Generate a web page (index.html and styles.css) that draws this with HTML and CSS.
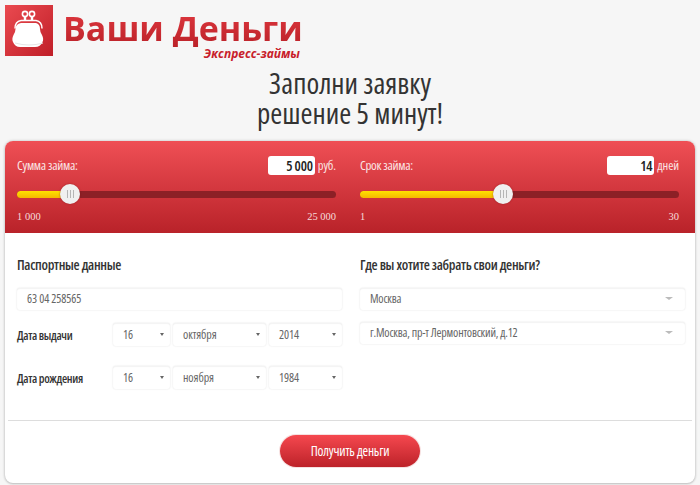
FILE: index.html
```html
<!DOCTYPE html>
<html lang="ru">
<head>
<meta charset="utf-8">
<title>Ваши Деньги</title>
<link rel="stylesheet" href="styles.css">
</head>
<body>
<header class="brand">
  <svg class="brand-icon" viewBox="0 0 48 51" width="48" height="51" aria-hidden="true">
    <defs>
      <linearGradient id="sq" x1="0" y1="0" x2="1" y2="1">
        <stop offset="0" stop-color="#ea4a50"/>
        <stop offset="1" stop-color="#c01f28"/>
      </linearGradient>
    </defs>
    <rect width="48" height="51" fill="url(#sq)"/>
    <circle cx="20" cy="9" r="2.6" fill="none" stroke="#fff" stroke-width="1.6"/>
    <circle cx="27" cy="9" r="2.6" fill="none" stroke="#fff" stroke-width="1.6"/>
    <path d="M20 12v3M27 12v3" stroke="#fff" stroke-width="2.4"/>
    <path d="M16 15.500h15q6 1 6 8M16 15.500q-6 1-6 8" fill="none" stroke="#fff" stroke-width="1.500"/>
    <path d="M16 18h15q4 1 4 6 0 3 2 6 2 4 .5 7-2 5-7.500 5H15q-5 0-7-5-1.500-3 .5-7 2-3 2-6 0-5 5.500-6z" fill="#fff"/>
    <path d="M10 38q14 4 28 0" fill="none" stroke="#e6e6e6" stroke-width="1"/>
  </svg>
  <div class="brand-text">
    <div class="brand-name">Ваши Деньги</div>
    <div class="brand-sub">Экспресс-займы</div>
  </div>
</header>

<h1 class="title">Заполни заявку<br>решение 5 минут!</h1>

<main class="card">
  <section class="sliders">
    <div class="slider">
      <div class="slider-head">
        <span class="slider-label">Сумма займа:</span>
        <span class="slider-value"><span class="value-box">5 000</span><span class="unit">руб.</span></span>
      </div>
      <div class="track">
        <div class="fill" style="width:16.6%"><span class="thumb"></span></div>
      </div>
      <div class="range"><span>1 000</span><span>25 000</span></div>
    </div>
    <div class="slider">
      <div class="slider-head">
        <span class="slider-label">Срок займа:</span>
        <span class="slider-value"><span class="value-box">14</span><span class="unit">дней</span></span>
      </div>
      <div class="track">
        <div class="fill" style="width:44.8%"><span class="thumb"></span></div>
      </div>
      <div class="range"><span>1</span><span>30</span></div>
    </div>
  </section>

  <section class="form">
    <div class="col">
      <h2 class="col-title">Паспортные данные</h2>
      <div class="field passport">63 04 258565</div>
      <div class="date-row">
        <span class="date-label">Дата выдачи</span>
        <div class="date-selects">
          <div class="field pick">16</div>
          <div class="field pick">октября</div>
          <div class="field pick">2014</div>
        </div>
      </div>
      <div class="date-row">
        <span class="date-label">Дата рождения</span>
        <div class="date-selects">
          <div class="field pick">16</div>
          <div class="field pick">ноября</div>
          <div class="field pick">1984</div>
        </div>
      </div>
    </div>
    <div class="col">
      <h2 class="col-title">Где вы хотите забрать свои деньги?</h2>
      <div class="field pick wide">Москва</div>
      <div class="field pick wide second">г.Москва, пр-т Лермонтовский, д.12</div>
    </div>
  </section>

  <footer class="actions">
    <button class="submit" type="button">Получить деньги</button>
  </footer>
</main>
</body>
</html>
```
FILE: styles.css
```css
* { box-sizing: border-box; }

html, body { height: 100%; }

body {
  margin: 0;
  background: #f6f6f6;
  color: #333;
  font-family: "Open Sans", "Liberation Sans", sans-serif;
  font-stretch: 75%;
  overflow: hidden;
}

.brand {
  display: flex;
  gap: 10px;
  padding: 5px 0 0 5px;
  height: 68px;
}

.brand-icon { display: block; flex: none; }

.brand-text { width: 240px; position: relative; }

.brand-name {
  margin-top: 4px;
  font-stretch: 100%;
  font-weight: 700;
  font-size: 34px;
  line-height: 38px;
  white-space: nowrap;
  background: linear-gradient(#e0383f, #bb2229);
  -webkit-background-clip: text;
  background-clip: text;
  color: transparent;
}

.brand-sub {
  position: absolute;
  right: 3px;
  top: 42px;
  font-stretch: 100%;
  font-style: italic;
  font-weight: 700;
  font-size: 12px;
  line-height: 13px;
  color: #c8202a;
  white-space: nowrap;
}

.title {
  margin: 0;
  height: 73px;
  text-align: center;
  font-weight: 400;
  font-size: 29px;
  line-height: 30px;
  color: #333;
}

.card {
  margin: 0 5px;
  height: 342px;
  background: #fff;
  border-radius: 8px;
  box-shadow: 0 0 3px #bdbdbd, 0 1px 2px #c8c8c8;
  overflow: hidden;
}

.sliders {
  display: flex;
  gap: 24px;
  height: 92px;
  padding: 14px 16px 0 12px;
  background: linear-gradient(#ef4f55, #b92229);
  color: #fff;
}

.slider { width: 319px; }

.slider-head {
  display: flex;
  justify-content: space-between;
  align-items: center;
  height: 20px;
}

.slider-label {
  font-size: 13px;
  letter-spacing: -0.3px;
  color: #fbe4e4;
}

.slider-value { display: flex; align-items: center; gap: 3px; }

.value-box {
  width: 47px;
  height: 19px;
  padding-right: 2px;
  background: #fff;
  border-radius: 3px;
  color: #222;
  font-weight: 600;
  font-size: 14px;
  letter-spacing: -0.2px;
  line-height: 19px;
  text-align: right;
}

.unit { font-size: 12.5px; letter-spacing: -0.1px; color: #fbe4e4; }

.track {
  height: 7px;
  margin-top: 16px;
  background: #8c2026;
  border-radius: 4px;
}

.fill {
  position: relative;
  height: 7px;
  background: linear-gradient(#ffe100, #f5b800);
  border-radius: 4px;
}

.thumb {
  position: absolute;
  right: -10px;
  top: -7px;
  width: 20px;
  height: 20px;
  border-radius: 50%;
  background:
    linear-gradient(#b5b5b5, #b5b5b5) 7px 6px / 1px 8px no-repeat,
    linear-gradient(#b5b5b5, #b5b5b5) 10px 6px / 1px 8px no-repeat,
    linear-gradient(#b5b5b5, #b5b5b5) 13px 6px / 1px 8px no-repeat,
    #f0f0f0;
  box-shadow: 0 0 2px rgba(120, 20, 20, .6);
}

.range {
  display: flex;
  justify-content: space-between;
  margin-top: 12px;
  font-family: "Liberation Serif", serif;
  font-size: 10.5px;
  line-height: 13px;
  color: #f6dcdc;
}

.form {
  display: flex;
  gap: 18px;
  height: 188px;
  margin: 0 3px;
  padding: 0 7px 0 9px;
  border-bottom: 1px solid #ddd;
}

.col { width: 325px; }

.col-title {
  margin: 0;
  padding-top: 23px;
  height: 55px;
  font-weight: 600;
  font-size: 14px;
  letter-spacing: -0.3px;
  line-height: 18px;
  color: #333;
}

.field {
  position: relative;
  height: 22px;
  padding-left: 10px;
  border-radius: 3px;
  background: #fff;
  box-shadow: 0 0 2px rgba(0, 0, 0, .12), inset 0 1px 1px rgba(0, 0, 0, .05);
  font-size: 12px;
  letter-spacing: -0.1px;
  line-height: 22px;
  color: #666;
  white-space: nowrap;
}

.pick::after {
  content: "";
  position: absolute;
  right: 6px;
  top: 10px;
  border: 2px solid transparent;
  border-top: 3px solid #666;
  border-bottom: 0;
}

.pick.wide { font-size: 12px; letter-spacing: -0.2px; }

.pick.wide::after {
  right: 12px;
  top: 9px;
  border-width: 3px 4px 0;
  border-top-color: #bbb;
}

.second { margin-top: 12px; }

.date-row {
  display: flex;
  align-items: center;
  height: 23px;
  margin-top: 13px;
}

.date-row + .date-row { margin-top: 20px; }

.date-label {
  width: 96px;
  flex: none;
  padding-top: 2px;
  font-weight: 600;
  font-size: 12px;
  letter-spacing: -0.35px;
  color: #333;
  white-space: nowrap;
}

.date-selects {
  display: grid;
  grid-template-columns: 57px 93px 73px;
  gap: 3px;
  flex: 1;
}

.date-selects .field {
  height: 23px;
  line-height: 24px;
}

.actions {
  display: flex;
  justify-content: center;
  padding-top: 14px;
}

.submit {
  width: 140px;
  height: 32px;
  padding: 0;
  border: 0;
  border-radius: 16px;
  background: linear-gradient(#f5484f, #bd2229);
  box-shadow: 0 0 0 1px #f6e0e0;
  color: #fff;
  font-family: inherit;
  font-stretch: inherit;
  font-weight: 400;
  font-size: 13.5px;
  letter-spacing: -0.2px;
}
```
